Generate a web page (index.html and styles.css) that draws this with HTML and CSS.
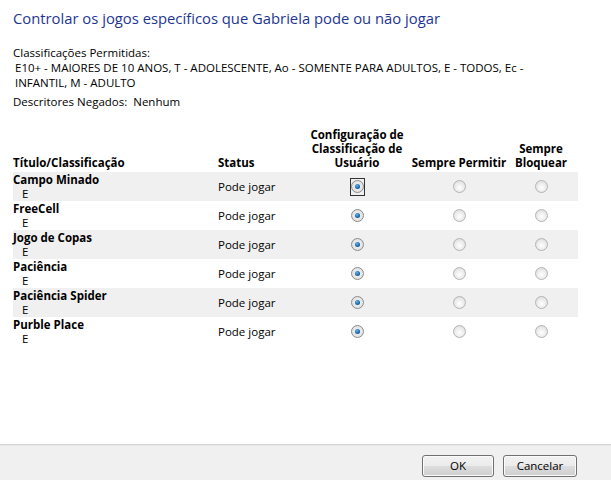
FILE: index.html
```html
<!DOCTYPE html>
<html lang="pt">
<head>
<meta charset="utf-8">
<link rel="stylesheet" href="styles.css">
</head>
<body>
<div class="dialog">
  <div class="content">
    <h1 class="title">Controlar os jogos específicos que Gabriela pode ou não jogar</h1>
    <div class="info">
      <div class="line">Classificações Permitidas:</div>
      <div class="ratings">E10+ - MAIORES DE 10 ANOS, T - ADOLESCENTE, Ao - SOMENTE PARA ADULTOS, E - TODOS, Ec - INFANTIL, M - ADULTO</div>
      <div class="denied">Descritores Negados:&nbsp; Nenhum</div>
    </div>
    <div class="grid">
      <div class="hd hd-left">Título/Classificação</div>
      <div class="hd hd-left">Status</div>
      <div class="hd">Configuração de Classificação de Usuário</div>
      <div class="hd">Sempre Permitir</div>
      <div class="hd">Sempre Bloquear</div>
      <div class="hd"></div>

      <div class="row shade">
        <div class="name"><b>Campo Minado</b><span class="rating">E</span></div>
        <div class="status">Pode jogar</div>
        <div class="cell"><span class="focus"><span class="radio on"></span></span></div>
        <div class="cell"><span class="radio"></span></div>
        <div class="cell"><span class="radio"></span></div>
        <div></div>
      </div>
      <div class="row">
        <div class="name"><b>FreeCell</b><span class="rating">E</span></div>
        <div class="status">Pode jogar</div>
        <div class="cell"><span class="radio on"></span></div>
        <div class="cell"><span class="radio"></span></div>
        <div class="cell"><span class="radio"></span></div>
        <div></div>
      </div>
      <div class="row shade">
        <div class="name"><b>Jogo de Copas</b><span class="rating">E</span></div>
        <div class="status">Pode jogar</div>
        <div class="cell"><span class="radio on"></span></div>
        <div class="cell"><span class="radio"></span></div>
        <div class="cell"><span class="radio"></span></div>
        <div></div>
      </div>
      <div class="row">
        <div class="name"><b>Paciência</b><span class="rating">E</span></div>
        <div class="status">Pode jogar</div>
        <div class="cell"><span class="radio on"></span></div>
        <div class="cell"><span class="radio"></span></div>
        <div class="cell"><span class="radio"></span></div>
        <div></div>
      </div>
      <div class="row shade">
        <div class="name"><b>Paciência Spider</b><span class="rating">E</span></div>
        <div class="status">Pode jogar</div>
        <div class="cell"><span class="radio on"></span></div>
        <div class="cell"><span class="radio"></span></div>
        <div class="cell"><span class="radio"></span></div>
        <div></div>
      </div>
      <div class="row">
        <div class="name"><b>Purble Place</b><span class="rating">E</span></div>
        <div class="status">Pode jogar</div>
        <div class="cell"><span class="radio on"></span></div>
        <div class="cell"><span class="radio"></span></div>
        <div class="cell"><span class="radio"></span></div>
        <div></div>
      </div>
    </div>
  </div>
  <div class="footer">
    <button class="btn">OK</button>
    <button class="btn">Cancelar</button>
  </div>
</div>
</body>
</html>
```
FILE: styles.css
```css
* { box-sizing: border-box; }
html, body { margin: 0; padding: 0; background: #fff; }
body {
  font-family: "Open Sans", "Noto Sans", sans-serif;
  font-size: 11.5px;
  color: #000;
}
.dialog {
  width: 611px;
  height: 480px;
  display: flex;
  flex-direction: column;
}
.content {
  flex: 1;
  padding: 0 13px;
}
.title {
  margin: 8px 0 0 0;
  font-size: 14.8px;
  line-height: 20px;
  font-weight: normal;
  color: #1e3691;
}
.info { margin-top: 17px; line-height: 15px; }
.ratings { padding-left: 2px; width: 520px; }
.denied { margin-top: 4px; }

.grid {
  margin-top: 19px;
  display: grid;
  grid-template-columns: 205px 92px 94px 110px 54px 10px;
  width: 565px;
}
.hd {
  font-weight: bold;
  line-height: 14px;
  text-align: center;
  align-self: end;
  padding-bottom: 2px;
}
.hd-left { text-align: left; }
.row {
  display: contents;
}
.row > div {
  height: 29px;
}
.row.shade > div { background: #f0f0f0; }
.name {
  line-height: 14px;
  padding-top: 1px;
  display: flex;
  flex-direction: column;
}
.rating { padding-left: 9px; }
.status {
  display: flex;
  align-items: center;
}
.cell {
  display: flex;
  align-items: center;
  justify-content: center;
}
.radio {
  display: block;
  width: 13px;
  height: 13px;
  border-radius: 50%;
  border: 1px solid #b4b4b4;
  background: radial-gradient(circle at 50% 60%, #ffffff 0%, #eeeeee 45%, #d6d6d6 100%);
  position: relative;
}
.radio.on {
  border-color: #8c8c8c;
  background: radial-gradient(circle at 50% 50%, #f4f4f4 0%, #e2e2e2 70%, #cfcfcf 100%);
}
.radio.on::after {
  content: "";
  position: absolute;
  left: 3px; top: 3px;
  width: 5px; height: 5px;
  border-radius: 50%;
  background: radial-gradient(circle at 40% 35%, #6fb6e8 0%, #1d6fb3 50%, #0f3f75 100%);
}
.focus {
  border: 1px solid #333;
  padding: 1px 0 2px 0;
  width: 15px;
  display: flex;
  justify-content: center;
}

.footer {
  height: 36px;
  background: #f0f0f0;
  border-top: 1px solid #d6d6d6;
  box-shadow: inset 0 1px 0 #e6e6e6;
  display: flex;
  justify-content: flex-end;
  align-items: flex-start;
  gap: 9px;
  padding: 10px 34px 0 0;
}
.btn {
  font-family: "Open Sans", "Noto Sans", sans-serif;
  font-size: 11.5px;
  color: #000;
  height: 22px;
  border: 1px solid #707070;
  border-radius: 3px;
  background: linear-gradient(#f2f2f2 0%, #ebebeb 50%, #dddddd 51%, #cfcfcf 100%);
  box-shadow: inset 0 0 0 1px #fbfbfb;
  padding: 0;
  line-height: 18px;
}
.btn:first-child { width: 72px; }
.btn:last-child { width: 74px; }
```
